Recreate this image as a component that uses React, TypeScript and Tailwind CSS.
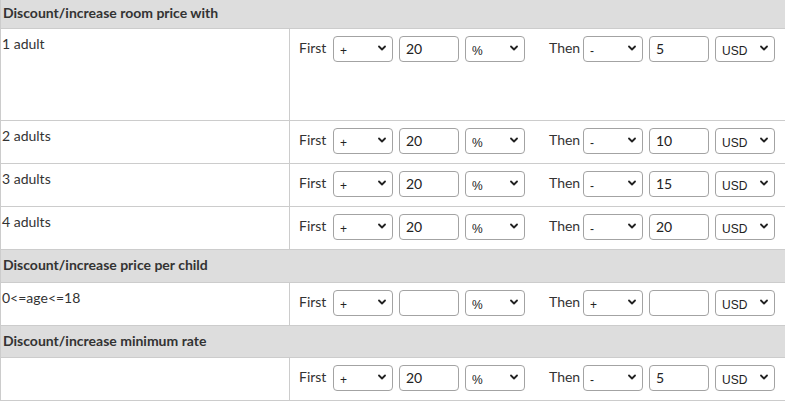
import type { ReactNode } from 'react';

type Adj = { sign1: string; val1: string; unit1: string; sign2: string; val2: string; unit2: string };

const ROOM_ROWS: { label: string; tall?: boolean; adj: Adj }[] = [
  { label: '1 adult', tall: true, adj: { sign1: '+', val1: '20', unit1: '%', sign2: '-', val2: '5', unit2: 'USD' } },
  { label: '2 adults', adj: { sign1: '+', val1: '20', unit1: '%', sign2: '-', val2: '10', unit2: 'USD' } },
  { label: '3 adults', adj: { sign1: '+', val1: '20', unit1: '%', sign2: '-', val2: '15', unit2: 'USD' } },
  { label: '4 adults', adj: { sign1: '+', val1: '20', unit1: '%', sign2: '-', val2: '20', unit2: 'USD' } },
];

function Select({ value, options }: { value: string; options: string[] }) {
  return (
    <div className="relative w-[60px] h-[26px] shrink-0">
      <select
        defaultValue={value}
        className="appearance-none w-full h-full border border-[#a3a3a3] rounded-[4px] bg-white pl-[6px] pt-[4px] text-[12px] text-[#222] font-['Liberation_Sans',Arial,sans-serif] outline-none"
      >
        {options.map((o) => (
          <option key={o} value={o}>
            {o}
          </option>
        ))}
      </select>
      <svg
        className="absolute right-[7px] top-[9px] pointer-events-none"
        width="8"
        height="6"
        viewBox="0 0 8 6"
        fill="none"
      >
        <path d="M1 1.5 L4 4.5 L7 1.5" stroke="#222" strokeWidth="1.8" strokeLinecap="round" strokeLinejoin="round" />
      </svg>
    </div>
  );
}

function NumInput({ value }: { value: string }) {
  return (
    <input
      type="text"
      defaultValue={value}
      className="w-[60px] h-[26px] shrink-0 border border-[#a3a3a3] rounded-[4px] bg-white px-[6px] pb-[1px] text-[14px] text-[#222] outline-none"
    />
  );
}

function Controls({ adj }: { adj: Adj }) {
  return (
    <div className="flex items-center">
      <span className="w-[34px] shrink-0 -mt-[4px]">First</span>
      <Select value={adj.sign1} options={['+', '-']} />
      <div className="w-[6px]" />
      <NumInput value={adj.val1} />
      <div className="w-[6px]" />
      <Select value={adj.unit1} options={['%', 'USD']} />
      <div className="w-[24px]" />
      <span className="w-[34px] shrink-0 -mt-[4px]">Then</span>
      <Select value={adj.sign2} options={['+', '-']} />
      <div className="w-[6px]" />
      <NumInput value={adj.val2} />
      <div className="w-[6px]" />
      <Select value={adj.unit2} options={['USD', '%']} />
    </div>
  );
}

function Header({ children, h }: { children: ReactNode; h: string }) {
  return (
    <div className={`${h} flex items-center bg-[#dddddd] border-b border-[#cccccc] pl-[2px] pb-[3px] font-bold`}>
      {children}
    </div>
  );
}

function Row({ label, tall, adj }: { label: string; tall?: boolean; adj: Adj }) {
  return (
    <div className={`grid grid-cols-[289px_1fr] border-b border-[#cccccc] ${tall ? 'h-[92px]' : 'h-[43px]'}`}>
      <div className="border-r border-[#cccccc] pl-[1px] pt-[5px] leading-5">{label}</div>
      <div className="pl-[9px] pt-[7px]">
        <Controls adj={adj} />
      </div>
    </div>
  );
}

export default function App() {
  return (
    <div className="w-[785px] h-[402px] overflow-hidden bg-white text-[#333333] text-[14px] font-['Lato','Noto_Sans',sans-serif]">
      <div className="border-l border-[#cccccc]">
        <Header h="h-[29px]">Discount/increase room price with</Header>
        {ROOM_ROWS.map((r) => (
          <Row key={r.label} label={r.label} tall={r.tall} adj={r.adj} />
        ))}
        <Header h="h-[33px]">Discount/increase price per child</Header>
        <Row
          label="0<=age<=18"
          adj={{ sign1: '+', val1: '', unit1: '%', sign2: '+', val2: '', unit2: 'USD' }}
        />
        <Header h="h-[32px]">Discount/increase minimum rate</Header>
        <Row label="" adj={{ sign1: '+', val1: '20', unit1: '%', sign2: '-', val2: '5', unit2: 'USD' }} />
      </div>
    </div>
  );
}
